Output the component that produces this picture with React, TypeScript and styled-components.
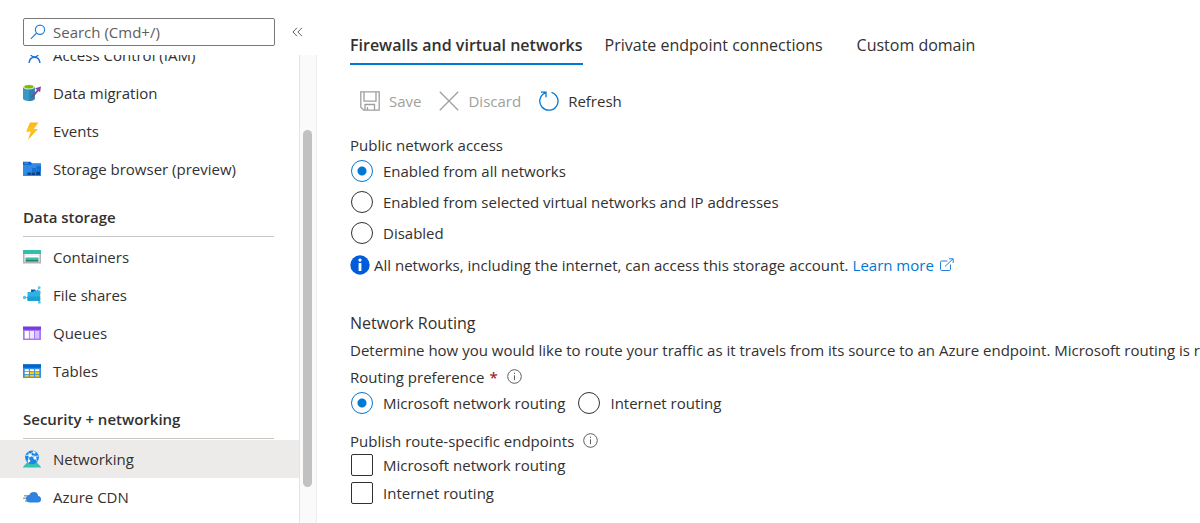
import React from "react";
import styled, { createGlobalStyle } from "styled-components";

const GlobalStyle = createGlobalStyle`
  *, *::before, *::after { box-sizing: border-box; }
  body {
    margin: 0;
    background: #fff;
    color: #323130;
    font-family: "Open Sans", "Noto Sans", sans-serif;
    font-size: 15px;
    line-height: 22px;
    overflow: hidden;
  }
  button, input { font: inherit; color: inherit; }
`;

const Page = styled.div`
  display: flex;
  height: 100vh;
`;

const Sidebar = styled.aside`
  display: flex;
  flex-direction: column;
  flex: 0 0 317px;
  min-height: 0;
`;

const SearchRow = styled.div`
  display: flex;
  align-items: center;
  gap: 17px;
  height: 55px;
  flex: none;
  padding: 9px 0 0 23px;
`;

const SearchBox = styled.label`
  display: flex;
  align-items: center;
  gap: 7px;
  width: 252px;
  height: 28px;
  padding: 0 6px;
  border: 1px solid #7a7876;
  border-radius: 2px;
`;

const SearchInput = styled.input`
  flex: 1;
  min-width: 0;
  padding: 0;
  border: 0;
  outline: 0;
  background: transparent;
  &::placeholder { color: #605e5c; opacity: 1; }
`;

const IconButton = styled.button`
  display: flex;
  padding: 0;
  border: 0;
  background: none;
  color: #605e5c;
`;

const MenuArea = styled.div`
  display: flex;
  flex: 1;
  min-height: 0;
  overflow: hidden;
`;

const Menu = styled.nav`
  flex: 1;
  margin-top: -19px;
`;

const ScrollTrack = styled.div`
  flex: 0 0 18px;
  padding: 75px 4px 0 3px;
  border-left: 1px solid #e4e4e4;
  border-right: 1px solid #ededed;
  background: #fafafa;
`;

const ScrollThumb = styled.div`
  height: 357px;
  border-radius: 5px;
  background: #c1c1c1;
`;

const MenuItem = styled.a<{ $active?: boolean }>`
  display: flex;
  align-items: center;
  gap: 12px;
  height: 38px;
  padding-left: 23px;
  color: inherit;
  text-decoration: none;
  background: ${(p) => (p.$active ? "#edebe9" : "transparent")};
`;

const MenuHeading = styled.h2`
  height: 49px;
  margin: 0 25px 1px 23px;
  padding-top: 18px;
  border-bottom: 1px solid #c8c6c4;
  font-size: 15px;
  font-weight: 600;
`;

const Main = styled.main`
  flex: 1;
  min-width: 0;
  overflow: hidden;
  padding: 34px 0 0 33px;
`;

const Tabs = styled.div`
  display: flex;
`;

const Tab = styled.button<{ $active?: boolean }>`
  height: 31px;
  margin-right: ${(p) => (p.$active ? "22px" : "34px")};
  padding: 1px 0 8px;
  border: 0;
  border-bottom: 2px solid ${(p) => (p.$active ? "#0078d4" : "transparent")};
  background: none;
  font-size: 16px;
  font-weight: ${(p) => (p.$active ? 600 : 400)};
  line-height: 20px;
  white-space: nowrap;
`;

const Toolbar = styled.div`
  display: flex;
  gap: 18px;
  height: 36px;
  margin-top: 18px;
  padding-left: 10px;
`;

const Command = styled.button`
  display: flex;
  align-items: center;
  gap: 9px;
  padding: 0;
  border: 0;
  background: none;
  &:disabled { color: #a19f9d; }
`;

const Group = styled.fieldset`
  min-width: 0;
  margin: 0;
  padding: 0;
  border: 0;
`;

const AccessGroup = styled(Group)`
  margin-top: 15px;
`;

const Legend = styled.legend`
  display: flex;
  align-items: center;
  height: 21px;
  padding: 0;
`;

const Options = styled.div<{ $inline?: boolean }>`
  display: flex;
  flex-direction: ${(p) => (p.$inline ? "row" : "column")};
  gap: ${(p) => (p.$inline ? "12px" : "0")};
`;

const Option = styled.label<{ $height: number }>`
  display: flex;
  align-items: center;
  gap: 10px;
  height: ${(p) => p.$height}px;
  padding-left: 1px;
`;

const Radio = styled.input.attrs({ type: "radio" })`
  appearance: none;
  flex: none;
  width: 22px;
  height: 22px;
  margin: 0;
  border: 1px solid #323130;
  border-radius: 50%;
  &:checked {
    border-color: #0078d4;
    background: radial-gradient(circle, #0078d4 4px, #fff 5px);
  }
`;

const Checkbox = styled.input.attrs({ type: "checkbox" })`
  appearance: none;
  flex: none;
  width: 22px;
  height: 22px;
  margin: 0;
  border: 1px solid #323130;
  border-radius: 2px;
`;

const Notice = styled.p`
  display: flex;
  align-items: center;
  height: 33px;
  margin: 0;
`;

const NoticeText = styled.span`
  margin: 0 4px;
`;

const Link = styled.a`
  display: flex;
  align-items: center;
  gap: 6px;
  color: #0078d4;
  text-decoration: none;
`;

const SectionTitle = styled.h2`
  margin: 31px 0 0;
  font-size: 16px;
  font-weight: 400;
  line-height: 22px;
`;

const Description = styled.p`
  margin: 5px 0;
  white-space: nowrap;
`;

const Required = styled.span`
  margin: 0 9px 0 5px;
  color: #a4262c;
  font-weight: 600;
`;

const LegendText = styled.span`
  margin-right: 9px;
`;

const EndpointGroup = styled(Group)`
  margin-top: 12px;
`;

const icon18 = { width: 18, height: 18, viewBox: "0 0 18 18", "aria-hidden": true } as const;

const SearchIcon = () => (
  <svg width="16" height="16" viewBox="0 0 16 16" fill="none" stroke="#2680d9" strokeWidth="1.2">
    <circle cx="10" cy="5.7" r="4.6" />
    <path d="M6.7 9 .8 14.9" />
  </svg>
);

const CollapseIcon = () => (
  <svg width="11" height="10" viewBox="0 0 11 10" fill="none" stroke="currentColor">
    <path d="M5 .8.9 5 5 9.2M10 .8 5.900 5 10 9.200" />
  </svg>
);

const PersonIcon = () => (
  <svg {...icon18} fill="none" stroke="#1673e6" strokeWidth="1.5">
    <circle cx="11.500" cy="7" r="4" />
    <path d="M6 16.800c.6-3.800 2.500-5.600 5.500-5.600s4.900 1.800 5.500 5.600" />
  </svg>
);

const MigrationIcon = () => (
  <svg {...icon18}>
    <path d="M0 3v11.500C0 16 2.700 17 5.900 17s5.900-1 5.900-2.500V3z" fill="#3999c6" />
    <path d="M6 3v14c3.200 0 5.800-1 5.800-2.500V3z" fill="#2f83b0" />
    <ellipse cx="5.900" cy="3" rx="5.900" ry="2.500" fill="#dcebd0" />
    <ellipse cx="5.900" cy="2.800" rx="4.600" ry="1.700" fill="#7fba00" />
    <path d="m8 12.500 6-6.600-1.800-1.700 5.800-1.700-.9 5.800-1.600-1.200-5.600 6.700z" fill="#804998" />
  </svg>
);

const EventsIcon = () => (
  <svg {...icon18}>
    <defs><linearGradient id="bolt" x2="0" y2="1"><stop stopColor="#ffb51b" /><stop offset=".5" stopColor="#fec51c" /><stop offset="1" stopColor="#f5a800" /></linearGradient></defs>
    <path d="M7 .5h8.300L10.800 7H15L5 17.500l2.800-7.800H3z" fill="url(#bolt)" />
  </svg>
);

const BrowserIcon = () => (
  <svg {...icon18}>
    <path d="M0 1.800h7.500L9 3.500h9V16H0z" fill="#0f5fc4" />
    <path d="M0 4.800h8l1.500-1.300H18V16H0z" fill="#2e8be6" />
    <path d="M1.300 2.600h4v1h-4z" fill="#5ea0ef" />
    <path d="M9 8h4v4H9zM13.500 6H18v5h-4.500z" fill="#1a6fd0" />
    <path d="M4.500 12.500h3.300V15H4.500zM8.600 12.500h3.700V15H8.600zM13.200 11.500H17V15h-3.800z" fill="#0b3f8a" />
  </svg>
);

const ContainersIcon = () => (
  <svg {...icon18}>
    <path d="M0 5h18v10.500H0z" fill="#b3b3b3" />
    <path d="M1.500 5h15v9h-15z" fill="#f2f2f2" />
    <path d="M0 2h18v4H0z" fill="#32bdad" />
    <path d="M2 8h14v2H2z" fill="#fff" />
    <path d="M2.500 9.500h13v2h-13z" fill="#32bdad" />
    <path d="M2.500 11.500h13v2.200h-13z" fill="#258277" />
  </svg>
);

const FilesIcon = () => (
  <svg {...icon18}>
    <path d="M3 11.500h3M14 5l2-3M14 14l2.500 2" stroke="#50c7e8" />
    <path d="M8 3.500h4l1 1.200h4.200V8H8z" fill="#0b5cad" />
    <path d="M5 6h5l1.500-1.300h5.700V14c0 .6-.4 1-1 1H5.500a1 1 0 0 1-1-1V6.500z" fill="#2bb3e3" />
    <path d="M4.500 10.500h12.700V14c0 .6-.4 1-1 1H5.500a1 1 0 0 1-1-1z" fill="#1e9fd4" />
    <circle cx="1.600" cy="11.500" r="1.700" fill="#50c7e8" />
    <circle cx="16.200" cy="1.700" r="1.400" fill="#50c7e8" />
    <circle cx="16.400" cy="16.400" r="1.400" fill="#50c7e8" />
  </svg>
);

const QueuesIcon = () => (
  <svg {...icon18}>
    <path d="M0 3h18v12.500a.6.6 0 0 1-.6.600H.6a.6.6 0 0 1-.6-.6z" fill="#a67af4" />
    <path d="M0 2.500h18v3.300H0z" fill="#773adc" />
    <path d="M1.700 7h4.200v7.500H1.700z" fill="#fff" />
    <path d="M6.800 7H11v7.500H6.800z" fill="#eee5ff" />
    <path d="M12 7h4.200v7.500H12z" fill="#d5bfff" />
  </svg>
);

const TablesIcon = () => (
  <svg {...icon18}>
    <path d="M0 2.500h18v13.400H0z" fill="#2f8fe8" />
    <path d="M0 2.200h18v3.600H0z" fill="#0068c8" />
    <path d="M1.700 7.200h4.200v2H1.700zM6.900 7.200h4.200v2H6.900zM12.100 7.200h4.200v2h-4.200z" fill="#fff" />
    <path d="M1.700 10h4.200v2H1.700z" fill="#fff" />
    <path d="M6.900 10h4.200v2H6.900zM12.100 10h4.200v2h-4.200z" fill="#ffca00" />
    <path d="M1.700 12.800h4.200v1.900H1.700zM6.900 12.800h4.200v1.900H6.900zM12.100 12.800h4.200v1.900h-4.200z" fill="#ffca00" />
  </svg>
);

const NetworkingIcon = () => (
  <svg {...icon18}>
    <path d="M4 12.500h10l4 4.500v.6H0V17z" fill="#37c2b1" />
    <circle cx="9" cy="7.300" r="6.900" fill="#1988e5" />
    <g fill="none" stroke="#cfeaff" strokeWidth="1">
      <path d="M2.700 5.500c3.800-.8 8.200.2 11.500 5.500M5.500 12.800c-.5-4.500 1-9 5.500-11.500M5 2.500c2 3 6 4.500 10.300 3.500" />
    </g>
    <circle cx="7" cy="5.300" r="1.700" fill="#fff" />
    <circle cx="12" cy="8" r="1.500" fill="#fff" />
    <circle cx="6" cy="10.800" r="1.300" fill="#fff" />
    <circle cx="11.300" cy="2.600" r="1.200" fill="#fff" />
  </svg>
);

const CdnIcon = () => (
  <svg {...icon18}>
    <path d="M1 7h8v1.400H1zM0 9.600h8V11H0zM2 12.300h7v1.400H2z" fill="#a3a3a3" />
    <path d="M18 11.200a3.200 3.200 0 0 0-2.900-3.100A4.400 4.400 0 0 0 10.600 4a4.500 4.500 0 0 0-4.300 2.900A4 4 0 0 0 3 10.700a4 4 0 0 0 4 3.700h7.800a3.200 3.200 0 0 0 3.200-3.200z" fill="#2f83e0" />
  </svg>
);

const SaveIcon = () => (
  <svg width="20" height="20" viewBox="0 0 20 20" fill="none" stroke="currentColor" strokeWidth="1.300">
    <path d="M.8.800h18.400v18.400H3.800L.8 16.200zM4 .800v9.400h12V.800M5 19v-5.500h9.500V19M7.500 16v3" />
  </svg>
);

const DiscardIcon = () => (
  <svg width="20" height="20" viewBox="0 0 20 20" fill="none" stroke="currentColor" strokeWidth="1.300">
    <path d="m.8.800 18.400 18.400M19.200.800.8 19.200" />
  </svg>
);

const RefreshIcon = () => (
  <svg width="20" height="20" viewBox="0 0 20 20" fill="none" stroke="#0078d4" strokeWidth="1.300">
    <path d="M12.500 1.400A9.100 9.100 0 1 1 6.200 1.800M2 1.200h5v5" />
  </svg>
);

const NoticeIcon = () => (
  <svg width="20" height="20" viewBox="0 0 20 20" aria-hidden="true">
    <circle cx="10" cy="10" r="9.700" fill="#015cda" />
    <circle cx="10" cy="5.100" r="1.600" fill="#fff" />
    <path d="M8.600 8h2.800v8H8.600z" fill="#fff" />
  </svg>
);

const ExternalIcon = () => (
  <svg width="14" height="14" viewBox="0 0 14 14" fill="none" stroke="#2680d9">
    <path d="M7.500 3H1.700A1.200 1.200 0 0 0 .5 4.200v7.100a1.200 1.200 0 0 0 1.200 1.200h7.600a1.200 1.200 0 0 0 1.200-1.200V6.500M5 8.500 13 .8M9 .8h4.200V5" />
  </svg>
);

const InfoIcon = () => (
  <svg width="15" height="15" viewBox="0 0 15 15" fill="none" stroke="#605e5c">
    <circle cx="7.500" cy="7.500" r="6.800" />
    <path d="M7.500 6.300v4.900M7.500 3.700v1.300" />
  </svg>
);

type Entry = { label: string; Icon: React.FC; active?: boolean };

const general: Entry[] = [
  { label: "Access Control (IAM)", Icon: PersonIcon },
  { label: "Data migration", Icon: MigrationIcon },
  { label: "Events", Icon: EventsIcon },
  { label: "Storage browser (preview)", Icon: BrowserIcon },
];

const storage: Entry[] = [
  { label: "Containers", Icon: ContainersIcon },
  { label: "File shares", Icon: FilesIcon },
  { label: "Queues", Icon: QueuesIcon },
  { label: "Tables", Icon: TablesIcon },
];

const security: Entry[] = [
  { label: "Networking", Icon: NetworkingIcon, active: true },
  { label: "Azure CDN", Icon: CdnIcon },
];

const MenuItems = ({ entries }: { entries: Entry[] }) => (
  <>
    {entries.map(({ label, Icon, active }) => (
      <MenuItem key={label} href="#" $active={active} aria-current={active ? "page" : undefined}>
        <Icon />
        {label}
      </MenuItem>
    ))}
  </>
);

export default function App() {
  return (
    <>
      <GlobalStyle />
      <Page>
        <Sidebar>
          <SearchRow>
            <SearchBox>
              <SearchIcon />
              <SearchInput type="text" placeholder="Search (Cmd+/)" aria-label="Search" />
            </SearchBox>
            <IconButton type="button" aria-label="Collapse menu">
              <CollapseIcon />
            </IconButton>
          </SearchRow>
          <MenuArea>
            <Menu>
              <MenuItems entries={general} />
              <MenuHeading>Data storage</MenuHeading>
              <MenuItems entries={storage} />
              <MenuHeading>Security + networking</MenuHeading>
              <MenuItems entries={security} />
            </Menu>
            <ScrollTrack>
              <ScrollThumb />
            </ScrollTrack>
          </MenuArea>
        </Sidebar>
        <Main>
          <Tabs role="tablist">
            <Tab type="button" role="tab" aria-selected $active>Firewalls and virtual networks</Tab>
            <Tab type="button" role="tab">Private endpoint connections</Tab>
            <Tab type="button" role="tab">Custom domain</Tab>
          </Tabs>
          <Toolbar>
            <Command type="button" disabled><SaveIcon />Save</Command>
            <Command type="button" disabled><DiscardIcon />Discard</Command>
            <Command type="button"><RefreshIcon />Refresh</Command>
          </Toolbar>
          <AccessGroup>
            <Legend>Public network access</Legend>
            <Options>
              <Option $height={31}><Radio name="access" defaultChecked />Enabled from all networks</Option>
              <Option $height={31}><Radio name="access" />Enabled from selected virtual networks and IP addresses</Option>
              <Option $height={31}><Radio name="access" />Disabled</Option>
            </Options>
          </AccessGroup>
          <Notice>
            <NoticeIcon />
            <NoticeText>All networks, including the internet, can access this storage account.</NoticeText>
            <Link href="#">Learn more<ExternalIcon /></Link>
          </Notice>
          <SectionTitle>Network Routing</SectionTitle>
          <Description>
            Determine how you would like to route your traffic as it travels from its source to an Azure endpoint. Microsoft routing is recommended for most customers.
          </Description>
          <Group>
            <Legend>Routing preference<Required>*</Required><InfoIcon /></Legend>
            <Options $inline>
              <Option $height={31}><Radio name="routing" defaultChecked />Microsoft network routing</Option>
              <Option $height={31}><Radio name="routing" />Internet routing</Option>
            </Options>
          </Group>
          <EndpointGroup>
            <Legend><LegendText>Publish route-specific endpoints</LegendText><InfoIcon /></Legend>
            <Options>
              <Option $height={28}><Checkbox />Microsoft network routing</Option>
              <Option $height={28}><Checkbox />Internet routing</Option>
            </Options>
          </EndpointGroup>
        </Main>
      </Page>
    </>
  );
}
